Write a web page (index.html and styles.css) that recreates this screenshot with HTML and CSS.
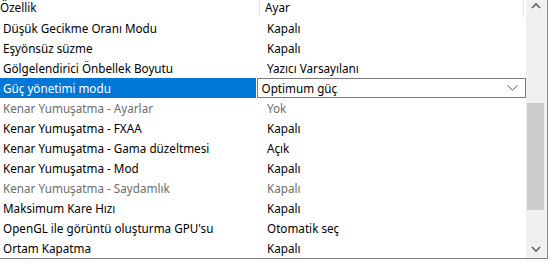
FILE: index.html
```html
<!DOCTYPE html>
<html lang="tr">
  <head>
    <meta charset="UTF-8" />
    <title>Ayarlar</title>
    <link rel="stylesheet" href="styles.css">
  </head>
  <body>
    <div class="panel">
      <div class="grid">
        <div class="head">
          <div class="col name">Özellik</div>
          <div class="col value">Ayar</div>
        </div>
        <div class="row"><div class="name">Düşük Gecikme Oranı Modu</div><div class="value">Kapalı</div></div>
        <div class="row"><div class="name">Eşyönsüz süzme</div><div class="value">Kapalı</div></div>
        <div class="row"><div class="name">Gölgelendirici Önbellek Boyutu</div><div class="value">Yazıcı Varsayılanı</div></div>
        <div class="row selected">
          <div class="name">Güç yönetimi modu</div>
          <div class="combo">
            <span>Optimum güç</span>
            <svg class="caret" width="11" height="6" viewBox="0 0 11 6"><path d="M0.5 0.5 L5.5 5 L10.5 0.5" fill="none" stroke="#555" stroke-width="1"/></svg>
          </div>
        </div>
        <div class="row off"><div class="name">Kenar Yumuşatma - Ayarlar</div><div class="value">Yok</div></div>
        <div class="row"><div class="name">Kenar Yumuşatma - FXAA</div><div class="value">Kapalı</div></div>
        <div class="row"><div class="name">Kenar Yumuşatma - Gama düzeltmesi</div><div class="value">Açık</div></div>
        <div class="row"><div class="name">Kenar Yumuşatma - Mod</div><div class="value">Kapalı</div></div>
        <div class="row off"><div class="name">Kenar Yumuşatma - Saydamlık</div><div class="value">Kapalı</div></div>
        <div class="row"><div class="name">Maksimum Kare Hızı</div><div class="value">Kapalı</div></div>
        <div class="row"><div class="name">OpenGL ile görüntü oluşturma GPU'su</div><div class="value">Otomatik seç</div></div>
        <div class="row"><div class="name">Ortam Kapatma</div><div class="value">Kapalı</div></div>
      </div>
      <div class="scrollbar">
        <svg class="arrow" width="10" height="6" viewBox="0 0 10 6"><path d="M1 5 L5 1 L9 5" fill="none" stroke="#606060" stroke-width="1.6"/></svg>
        <div class="track">
          <div class="thumb"></div>
        </div>
        <svg class="arrow" width="10" height="6" viewBox="0 0 10 6"><path d="M1 1 L5 5 L9 1" fill="none" stroke="#606060" stroke-width="1.6"/></svg>
      </div>
    </div>
  </body>
</html>
```
FILE: styles.css
```css
body {
  margin: 0;
  padding: 0;
  background: #ffffff;
  font-family: "Noto Sans", "Liberation Sans", sans-serif;
  font-size: 11.7px;
  color: #000000;
}

.panel {
  display: flex;
  width: 547px;
  height: 258px;
  border-right: 1px solid #828282;
  border-bottom: 1px solid #828282;
  overflow: hidden;
}

.grid {
  width: 526px;
}

/* column headers */
.head {
  display: flex;
  height: 18px;
}
.head .col {
  height: 17px;
  line-height: 15px;
}
.head .name {
  width: 259px;
  border-right: 1px solid #e5e5e5;
}
.head .value {
  width: 258px;
  padding-left: 5px;
  border-right: 1px solid #e5e5e5;
}

.row {
  display: flex;
  height: 20px;
  line-height: 20px;
}
.row .name {
  width: 257px;
  padding-left: 3px;
  white-space: nowrap;
}
.row .value {
  padding-left: 7px;
  white-space: nowrap;
}
.row.off {
  color: #6d6d6d;
}

.row.selected .name {
  background: #0078d7;
  color: #ffffff;
  width: 254px;
}
.combo {
  display: flex;
  align-items: center;
  justify-content: space-between;
  margin-left: 1px;
  width: 258px;
  height: 18px;
  border: 1px solid #7a7a7a;
  padding: 0 7px 0 4px;
  line-height: 18px;
}

.scrollbar {
  width: 20px;
  background: #f0f0f0;
  display: flex;
  flex-direction: column;
  align-items: center;
}
.arrow {
  margin: 3px 0 6px;
}
.track {
  flex: 1;
  width: 100%;
  padding-top: 88px;
}
.thumb {
  margin-left: 1px;
  width: 17px;
  height: 107px;
  background: #cdcdcd;
}
```
